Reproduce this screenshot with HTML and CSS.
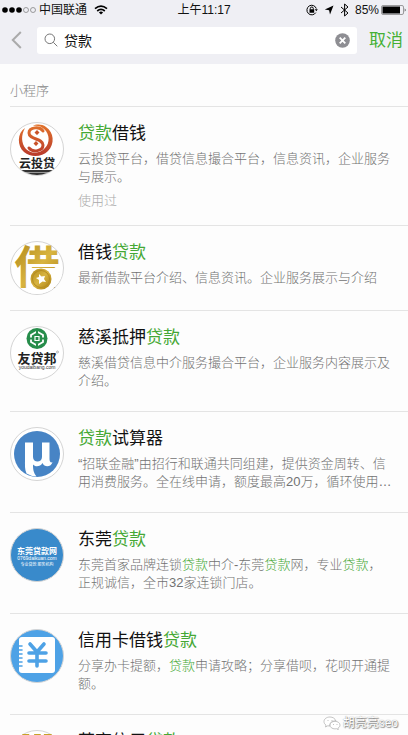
FILE: index.html
```html
<!DOCTYPE html>
<html lang="zh-CN">
<head>
<meta charset="utf-8">
<meta name="viewport" content="width=device-width, initial-scale=1">
<title>贷款 - 搜索</title>
<link rel="stylesheet" href="styles.css">
</head>
<body>
<div class="screen">
  <header class="top">
    <div class="status">
      <div class="status-left">
        <svg class="signal" viewBox="0 0 35 8" width="35" height="8" aria-hidden="true">
          <circle cx="4" cy="4" r="2.8"/><circle cx="11" cy="4" r="2.8"/><circle cx="18" cy="4" r="2.8"/>
          <circle class="hollow" cx="25" cy="4" r="2.5"/><circle class="hollow" cx="32" cy="4" r="2.5"/>
        </svg>
        <span>中国联通</span>
        <svg class="wifi" viewBox="0 0 14 10" width="14" height="10" aria-hidden="true">
          <path class="arc" d="M1 3.600Q7 -1.400 13 3.600M3.200 6Q7 2.800 10.800 6"/><path d="M7 9.600 4.900 7.400Q7 5.800 9.100 7.400Z"/>
        </svg>
      </div>
      <div class="status-time">上午11:17</div>
      <div class="status-right">
        <svg viewBox="0 0 12 12" width="12" height="12" aria-hidden="true">
          <path class="line" d="M9.800 8.600A4.800 4.800 0 1 1 10.300 4.600M4.300 5.500V4.500a1.500 1.500 0 0 1 3 0v1"/><path d="M3.500 5.300h4.700v3.400H3.500zM8.800 5.200h3L10.300 7.200z"/>
        </svg>
        <svg viewBox="0 0 10 10" width="10" height="10" aria-hidden="true"><path d="M9.500.6 6 9.400 5.100 5.200.8 4.500Z"/></svg>
        <svg viewBox="0 0 9 14" width="9" height="14" aria-hidden="true"><path class="line" d="M1 4 8 10 4.600 13V1L8 4 1 10"/></svg>
        <span>85%</span>
        <svg viewBox="0 0 26 10" width="26" height="10" aria-hidden="true">
          <rect class="shell" x=".5" y=".5" width="22" height="9" rx="1.500"/><rect x="1.500" y="1.500" width="17.500" height="7"/><path d="M23.800 3.200q1.600 1.800 0 3.600z"/>
        </svg>
      </div>
    </div>
    <form class="search">
      <button class="back" type="button" aria-label="返回">
        <svg viewBox="0 0 11 18" width="11" height="18"><path d="M9.800 1 1.800 9l8 8"/></svg>
      </button>
      <div class="field">
        <svg class="glass" viewBox="0 0 14 14" width="14" height="14" aria-hidden="true"><circle cx="5.800" cy="5.800" r="4.800"/><path d="m9.300 9.300 4 4"/></svg>
        <input class="query" type="text" value="贷款" aria-label="搜索">
        <button class="clear" type="button" aria-label="清除">
          <svg viewBox="0 0 15 15" width="15" height="15"><circle cx="7.500" cy="7.500" r="7.300"/><path d="m4.700 4.700 5.600 5.600m0-5.600-5.600 5.600"/></svg>
        </button>
      </div>
      <button class="cancel" type="button">取消</button>
    </form>
  </header>

  <main class="results">
    <h1 class="section">小程序</h1>
    <ul class="list">
      <li class="item">
        <svg class="logo" viewBox="0 0 54 54" aria-hidden="true">
          <defs>
            <linearGradient id="flame" gradientUnits="userSpaceOnUse" x1="26" y1="2" x2="26" y2="34"><stop offset="0" stop-color="#e3752c"/><stop offset="1" stop-color="#b8392c"/></linearGradient>
            <clipPath id="disc"><circle cx="27" cy="27" r="26"/></clipPath>
          </defs>
          <circle class="rim" cx="27" cy="27" r="26.500"/>
          <path fill="url(#flame)" d="M15 6C7 11 7 24 14 30c7 6 18 5 24-1 7-7 6-19-2-24-4-3-10-3-13-1 4-1 8 0 11 3 6 5 6 14 1 19-5 6-14 6-19 1-5-6-5-14-1-21Z"/>
          <path fill="none" stroke="url(#flame)" stroke-width="3" stroke-linecap="round" d="M33 9c-3-5-14-4-14 2 0 7 14 5 14 12 0 6-10 8-14 3"/>
          <path fill="#c95228" d="m27 8 2.500 2.500L27 13l-2.500-2.500zM26 19l2.500 2.500L26 24l-2.500-2.500z"/>
          <text class="logo-dark" x="27" y="46" font-size="12">云投贷</text>
          <path clip-path="url(#disc)" fill="#333" d="M10 48h34v2H10zM14 50.500h27V53H14z"/>
        </svg>
        <div class="body">
          <h2 class="title"><em>贷款</em>借钱</h2>
          <p class="desc">云投贷平台，借贷信息撮合平台，信息资讯，企业服务与展示。</p>
          <p class="used">使用过</p>
        </div>
      </li>
      <li class="item">
        <svg class="logo" viewBox="0 0 54 54" aria-hidden="true">
          <defs><linearGradient id="gold" x1="0" y1="0" x2="1" y2="1"><stop offset="0" stop-color="#b18a1c"/><stop offset=".5" stop-color="#d8b440"/><stop offset="1" stop-color="#a87c10"/></linearGradient></defs>
          <circle class="rim" cx="27" cy="27" r="26.500"/>
          <text class="logo-gold" x="27" y="43" font-size="45">借</text>
          <path clip-path="url(#disc)" fill="#fff" d="M18 27h34v26H18z"/>
          <circle cx="31" cy="38" r="10.500" fill="url(#gold)"/><circle cx="31" cy="38" r="8.500" fill="none" stroke="#b58c22"/>
          <path fill="#fff" d="m29 33 2.500 2.500L35 35l-1 3 2 3-3.500-.5L29 43v-4l-3-2 3-1z"/>
        </svg>
        <div class="body">
          <h2 class="title">借钱<em>贷款</em></h2>
          <p class="desc">最新借款平台介绍、信息资讯。企业服务展示与介绍</p>
        </div>
      </li>
      <li class="item">
        <svg class="logo" viewBox="0 0 54 54" aria-hidden="true">
          <circle class="rim" cx="27" cy="27" r="26.500"/>
          <circle cx="27" cy="12.500" r="10.500" fill="#278d4b"/>
          <path fill="none" stroke="#fff" stroke-width="1.800" d="m27 5.500 6 3.500v7l-6 3.500-6-3.500V9z"/>
          <path fill="#278d4b" d="M26 4h2v4h-2zM26 17h2v4h-2zM19 11.500h4v2h-4zM31 11.500h4v2h-4z"/>
          <path fill="none" stroke="#fff" stroke-width="1.200" d="M25 10.500h4v4h-4z"/>
          <text class="logo-dark" x="27" y="37" font-size="13">友贷邦</text>
          <text class="logo-latin" x="27" y="43" font-size="5">youdaibang.com</text>
          <circle cx="47.500" cy="26" r="1" fill="none" stroke="#777" stroke-width=".5"/>
        </svg>
        <div class="body">
          <h2 class="title">慈溪抵押<em>贷款</em></h2>
          <p class="desc">慈溪借贷信息中介服务撮合平台，企业服务内容展示及介绍。</p>
        </div>
      </li>
      <li class="item">
        <svg class="logo" viewBox="0 0 54 54" aria-hidden="true">
          <circle class="rim" cx="27" cy="27" r="26.500"/>
          <circle cx="27" cy="27" r="23" fill="#4784c5"/>
          <path fill="#fff" d="M15 15.500h8V30c0 6 9 6 9 0V15.500h7.500V32c0 3 1.500 4 3 3-1 5-8 6-10 1-2 3.500-7 4.500-9.500 1.500 0 5 .5 8 3.500 12q-5 0-10-3c-2-4-1.500-9-1.500-14z"/>
        </svg>
        <div class="body">
          <h2 class="title"><em>贷款</em>试算器</h2>
          <p class="desc">“招联金融”由招行和联通共同组建，提供资金周转、信用消费服务。全在线申请，额度最高20万，循环使用…</p>
        </div>
      </li>
      <li class="item">
        <svg class="logo" viewBox="0 0 54 54" aria-hidden="true">
          <circle class="rim deep" cx="27" cy="27" r="26.500"/>
          <text class="logo-white strong" x="27" y="26" font-size="8">东莞贷款网</text>
          <text class="logo-white" x="27" y="32" font-size="5">0769daikuan.com</text>
          <text class="logo-white" x="27" y="38" font-size="4">专业贷款 服务机构</text>
        </svg>
        <div class="body">
          <h2 class="title">东莞<em>贷款</em></h2>
          <p class="desc">东莞首家品牌连锁<em>贷款</em>中介-东莞<em>贷款</em>网，专业<em>贷款</em>，正规诚信，全市32家连锁门店。</p>
        </div>
      </li>
      <li class="item">
        <svg class="logo" viewBox="0 0 54 54" aria-hidden="true">
          <circle class="rim blue" cx="27" cy="27" r="26.500"/>
          <rect x="9" y="8" width="36" height="36" rx="3" fill="#fff"/>
          <path stroke="#4ea2e6" stroke-width="1.600" stroke-linecap="round" d="M8 17h4M8 21h4M8 25h4M8 29h4M8 33h4M8 37h4"/>
          <path fill="none" stroke="#4ea2e6" stroke-width="3.600" stroke-linecap="round" stroke-linejoin="round" d="m20 15 7 8 7-8M19 24h17M19 32h17M27 24v13"/>
        </svg>
        <div class="body">
          <h2 class="title">信用卡借钱<em>贷款</em></h2>
          <p class="desc">分享办卡提额，<em>贷款</em>申请攻略；分享借呗，花呗开通提额。</p>
        </div>
      </li>
      <li class="item">
        <svg class="logo" viewBox="0 0 54 54" aria-hidden="true">
          <circle class="rim" cx="27" cy="27" r="26.500"/>
          <path fill="#c9a227" d="M12 4h7l2 4h-6zM24 4h7l-2 4h-4zM34 4h8l-3 4h-6z"/>
        </svg>
        <div class="body">
          <h2 class="title">苹享信用<em>贷款</em></h2>
        </div>
      </li>
    </ul>
  </main>

  <div class="watermark">
    <svg viewBox="0 0 18 14" width="18" height="14" aria-hidden="true"><path d="M7 1C3.500 1 1 3 1 5.600c0 1.500.8 2.700 2 3.500L2.500 11l2.200-1.200L7 10c-.8-3 2-5.500 6-5C12 2.500 9.800 1 7 1Z"/><path d="M12 5.300c-2.800 0-5 1.700-5 3.800s2.200 3.800 5 3.800l1.500-.2 1.800 1-.4-1.500c1.300-.7 2.100-1.800 2.100-3.100 0-2.100-2.200-3.800-5-3.800Z"/><path d="M5 4v1M9 4v1M10.500 8v1M14 8v1"/></svg>
    <span>胡亮亮seo</span>
  </div>
</div>
</body>
</html>
```
FILE: styles.css
```css
* {
  box-sizing: border-box;
}

body,
h1,
h2,
p,
ul {
  margin: 0;
  padding: 0;
}

body {
  background: #fdfdfd;
  color: #111;
  font-family: "Liberation Sans", "Noto Sans CJK SC", sans-serif;
  font-size: 13px;
}

button,
input {
  padding: 0;
  border: 0;
  background: none;
  font: inherit;
}

button {
  display: flex;
  align-items: center;
  cursor: pointer;
}

.screen {
  display: flex;
  flex-direction: column;
  height: 100vh;
  overflow: hidden;
}

.top {
  flex: none;
  background: #efeff4;
}

/* Status bar */
.status {
  display: grid;
  grid-template-columns: 1fr auto 1fr;
  align-items: center;
  height: 20px;
  padding: 0 1px;
  font-size: 12px;
  line-height: 20px;
}

.status-left,
.status-right {
  display: flex;
  align-items: center;
}

.status-left {
  gap: 3px;
}

.wifi {
  margin-left: 4px;
}

.status-right {
  justify-content: flex-end;
  gap: 6px;
}

.status-right span {
  margin-right: -4px;
}

.hollow,
.shell {
  fill: none;
  stroke: #777;
  stroke-width: 0.7;
}

.arc {
  fill: none;
  stroke: #000;
  stroke-width: 1.7;
}

.line {
  fill: none;
  stroke: #000;
}

/* Search bar */
.search {
  display: flex;
  align-items: center;
  height: 44px;
  padding: 0 5px 4px 11px;
}

.back {
  width: 26px;
  height: 27px;
}

.back path {
  fill: none;
  stroke: #aaa;
  stroke-width: 2;
}

.field {
  display: flex;
  flex: 1;
  align-items: center;
  gap: 6px;
  height: 27px;
  min-width: 0;
  padding: 0 7px;
  border-radius: 3px;
  background: #fff;
}

.glass {
  flex: none;
  fill: none;
  stroke: #777;
}

.query {
  flex: 1;
  min-width: 0;
  outline: 0;
  color: #111;
  font-size: 14px;
}

.clear circle {
  fill: #8e8e93;
}

.clear path {
  stroke: #fff;
  stroke-width: 1.8;
}

.cancel {
  margin-left: 12px;
  color: #45b035;
  font-size: 17px;
  line-height: 27px;
}

/* Results */
.results {
  flex: 1;
  min-height: 0;
  padding-left: 10px;
  overflow-y: auto;
  scrollbar-width: none;
}

.section {
  padding: 18px 0 6px;
  border-bottom: 1px solid #e4e4e4;
  color: #888;
  font-size: 13px;
  font-weight: 300;
  line-height: 18px;
}

.list {
  list-style: none;
}

.item {
  display: flex;
  align-items: flex-start;
  gap: 14px;
  padding: 15px 16px 15px 0;
  border-bottom: 1px solid #e4e4e4;
}

.body {
  flex: 1;
  min-width: 0;
}

.title {
  margin-bottom: 4px;
  font-size: 17px;
  font-weight: 400;
  line-height: 24px;
}

.desc {
  margin-bottom: 6px;
  color: #727272;
  font-weight: 300;
  line-height: 18px;
}

.used {
  color: #aaa;
  font-weight: 300;
  line-height: 18px;
}

em {
  color: #45a835;
  font-style: normal;
}

/* Round logos */
.logo {
  flex: none;
  width: 54px;
  height: 54px;
  text-anchor: middle;
}

.rim {
  fill: #fff;
  stroke: #d4d4d4;
}

.deep {
  fill: #398acb;
}

.blue {
  fill: #4ea2e6;
}

.logo-dark {
  fill: #222;
  font-weight: 700;
}

.logo-latin {
  fill: #333;
}

.logo-gold {
  fill: url(#gold);
  font-weight: 700;
}

.logo-white {
  fill: #fff;
}

.strong {
  font-weight: 700;
}

/* Account mark over the list */
.watermark {
  position: absolute;
  right: 10px;
  bottom: 3px;
  display: flex;
  align-items: center;
  gap: 2px;
  color: #fff;
  font-size: 12px;
  line-height: 18px;
  text-shadow: 0 0 1px #777, 1px 1px 1px #888;
}

.watermark path {
  fill: #fff;
  stroke: #aaa;
  stroke-width: 0.7;
}
```
